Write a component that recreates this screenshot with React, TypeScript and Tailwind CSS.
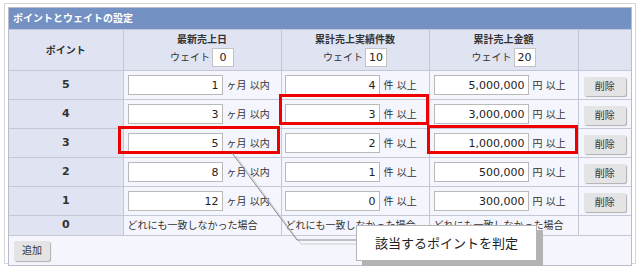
import React from "react";

const ROWS = [
    { point: "5", months: "1", count: "4", amount: "5,000,000" },
    { point: "4", months: "3", count: "3", amount: "3,000,000" },
    { point: "3", months: "5", count: "2", amount: "1,000,000" },
    { point: "2", months: "8", count: "1", amount: "500,000" },
    { point: "1", months: "12", count: "0", amount: "300,000" },
];

const FONT = "font-['DejaVu_Sans','Noto_Sans_CJK_JP',sans-serif]";

function NumBox({ value }: { value: string }) {
    return (
        <input
            readOnly
            value={value}
            className="w-[95px] h-[20px] bg-white border border-[#b9b9b9] text-right pr-[3px] text-[11px] text-[#222] outline-none"
        />
    );
}

function WeightBox({ value }: { value: string }) {
    return (
        <input
            readOnly
            value={value}
            className="w-[22px] h-[19px] bg-white border border-[#c4c4c4] text-center text-[11px] text-[#222] outline-none"
        />
    );
}

function HeadCell({ title, weight }: { title: string; weight: string }) {
    return (
        <th className="border border-[#c3c7d6] bg-[#dfe3f2] font-normal align-middle p-0">
            <div className="flex flex-col items-center gap-[1px]">
                <span className="font-bold text-[10px] leading-[14px]">{title}</span>
                <div className="flex items-center gap-[2px] text-[10px]">
                    <span>ウェイト</span>
                    <WeightBox value={weight} />
                </div>
            </div>
        </th>
    );
}

export default function App() {
    return (
        <div className={`relative w-[640px] h-[267px] bg-white text-[#333] ${FONT}`}>
            <div className="absolute left-[4px] top-[3px] w-[632px] h-[261px] border border-[#d6d6d6] p-[3px] pb-0 pl-[3px]">
                <div className="border border-[#b8bccb] bg-[#f5f6fd] flex flex-col">
                    {/* title bar */}
                    <div className="h-[21px] bg-[#7391c3] text-white font-bold text-[10px] flex items-center pl-[4px]">
                        ポイントとウェイトの設定
                    </div>

                    <table className="w-full border-collapse table-fixed">
                        <colgroup>
                            <col className="w-[114px]" />
                            <col className="w-[158px]" />
                            <col className="w-[148px]" />
                            <col className="w-[149px]" />
                            <col />
                        </colgroup>
                        <thead>
                            <tr className="h-[41px]">
                                <th className="border border-[#c3c7d6] border-l-0 bg-[#dfe3f2] text-[10px] font-bold">ポイント</th>
                                <HeadCell title="最新売上日" weight="0" />
                                <HeadCell title="累計売上実績件数" weight="10" />
                                <HeadCell title="累計売上金額" weight="20" />
                                <th className="border border-[#c3c7d6] border-r-0 bg-[#dfe3f2]" />
                            </tr>
                        </thead>
                        <tbody>
                            {ROWS.map(r => (
                                <tr key={r.point} className="h-[29px]">
                                    <td className="border border-[#c3c7d6] border-l-0 bg-[#dfe3f2] text-center font-bold text-[11px]">{r.point}</td>
                                    <td className="border border-[#c3c7d6] pl-[4px]">
                                        <div className="flex items-center gap-[4px] text-[10px]">
                                            <NumBox value={r.months} />
                                            <span>ヶ月 以内</span>
                                        </div>
                                    </td>
                                    <td className="border border-[#c3c7d6] pl-[3px]">
                                        <div className="flex items-center gap-[4px] text-[10px]">
                                            <NumBox value={r.count} />
                                            <span>件 以上</span>
                                        </div>
                                    </td>
                                    <td className="border border-[#c3c7d6] pl-[4px]">
                                        <div className="flex items-center gap-[4px] text-[10px]">
                                            <NumBox value={r.amount} />
                                            <span>円 以上</span>
                                        </div>
                                    </td>
                                    <td className="border border-[#c3c7d6] border-r-0 text-center">
                                        <button className="w-[42px] h-[19px] bg-[#e4e4e4] rounded-[2px] text-[10px] text-[#333] shadow-[1px_1px_1px_#b0b0b0]">削除</button>
                                    </td>
                                </tr>
                            ))}
                            <tr className="h-[20px] text-[10px]">
                                <td className="border border-[#c3c7d6] border-l-0 bg-[#dfe3f2] text-center font-bold text-[11px]">0</td>
                                <td className="border border-[#c3c7d6] pl-[4px]">どれにも一致しなかった場合</td>
                                <td className="border border-[#c3c7d6] pl-[4px]">どれにも一致しなかった場合</td>
                                <td className="border border-[#c3c7d6] pl-[4px]">どれにも一致しなかった場合</td>
                                <td className="border border-[#c3c7d6] border-r-0" />
                            </tr>
                        </tbody>
                    </table>

                    {/* footer */}
                    <div className="h-[29px] flex items-center pl-[5px]">
                        <button className="w-[36px] h-[20px] bg-[#e4e4e4] rounded-[2px] text-[10px] text-[#333] shadow-[1px_1px_1px_#b0b0b0]">追加</button>
                    </div>
                </div>
            </div>

            {/* highlight boxes */}
            <div className="absolute left-[118px] top-[126px] w-[162px] h-[28px] border-[3px] border-[#ee0000]" />
            <div className="absolute left-[279px] top-[94px] w-[150px] h-[31px] border-[3px] border-[#ee0000]" />
            <div className="absolute left-[427px] top-[125px] w-[151px] h-[29px] border-[3px] border-[#ee0000]" />

            {/* leader line */}
            <svg className="absolute left-0 top-0" width="640" height="267">
                <polyline points="236,156 301,244 358,244" fill="none" stroke="#d0d0d0" strokeWidth="1" />
                <polyline points="232,153 297,240 356,240" fill="none" stroke="#8a8a8a" strokeWidth="1" />
            </svg>

            {/* callout */}
            <div className="absolute left-[356px] top-[225px] w-[181px] h-[36px] bg-white border border-[#b5b5b5] shadow-[6px_5px_0_#b3b3b3] flex items-center justify-center text-[13px] text-[#222] font-['Noto_Sans_CJK_JP',sans-serif]">
                該当するポイントを判定
            </div>
        </div>
    );
}
